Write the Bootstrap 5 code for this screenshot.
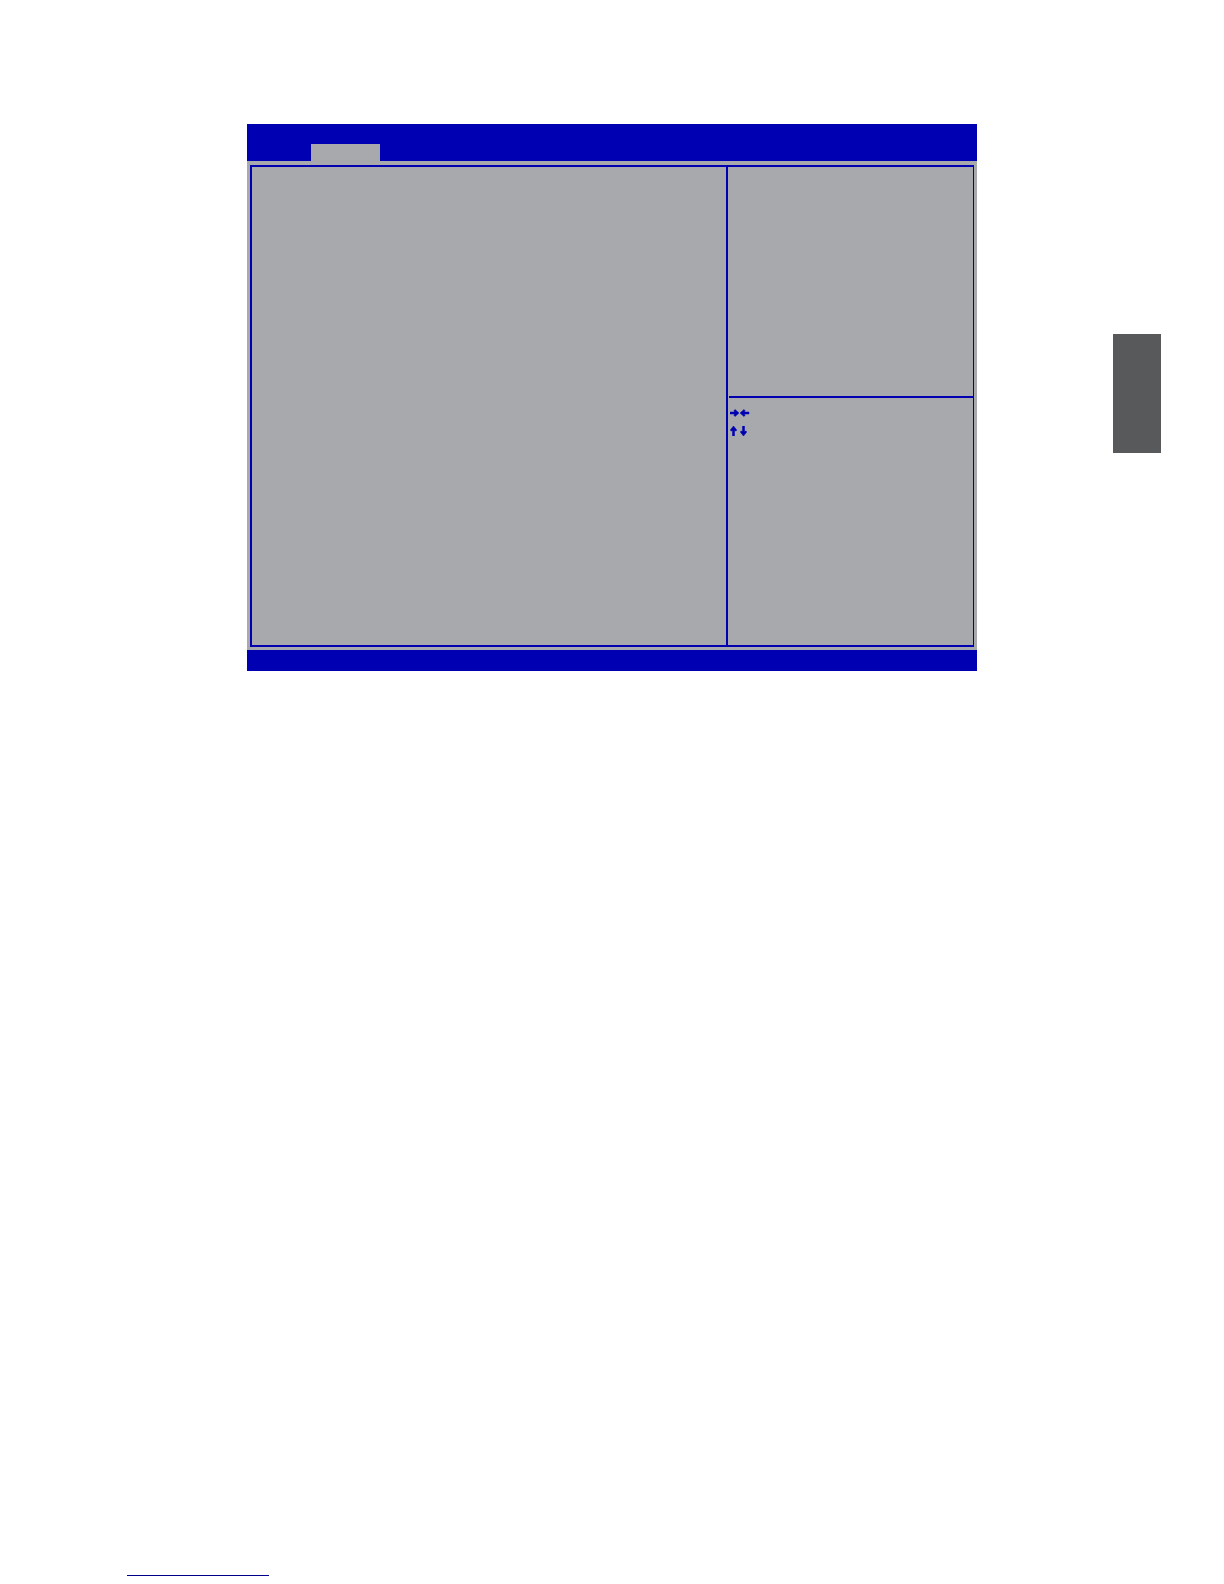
<!DOCTYPE html>
<html lang="en">
<head>
<meta charset="utf-8">
<meta name="viewport" content="width=device-width, initial-scale=1">
<title>Setup Utility</title>
<link href="https://cdn.jsdelivr.net/npm/bootstrap@5.3.0/dist/css/bootstrap.min.css" rel="stylesheet">
<style>
:root { --bios-blue: #0000b3; --bios-line: #0000b0; --bios-gray: #a7a9ac; }
body { background: #fff; font-family: "Liberation Sans", sans-serif; }
.sheet { padding: 124px 63px 0 247px; gap: 136px; }
.bios { background: var(--bios-gray); }
.bios-head { background: var(--bios-blue); height: 37px; padding-left: 64px; }
.bios-tab { width: 69px; height: 17px; background: var(--bios-gray); }
.bios-body { padding: 4px 3px 3px; }
.bios-frame { border: 2px solid var(--bios-line); border-right-width: 1px; min-height: 482px; }
.bios-side { width: 247px; flex: none; border-left: 2px solid var(--bios-line); }
.bios-help { height: 231px; margin-left: 1px; border-bottom: 2px solid var(--bios-line); }
.bios-keys { padding: 10px 2px; gap: 8px; }
.bios-keys svg { display: block; fill: var(--bios-blue); stroke: var(--bios-blue); stroke-width: .5; }
.bios-foot { background: var(--bios-blue); height: 21px; }
.thumb-tab { flex: none; width: 48px; height: 119px; margin-top: 210px; background: #58595b; }
.page-foot { padding: 0 0 8px 127px; }
.foot-link { width: 142px; height: 1px; background: #00008b; }
</style>
<script src="https://cdn.jsdelivr.net/npm/bootstrap@5.3.0/dist/js/bootstrap.bundle.min.js"></script>
</head>
<body>
<div class="d-flex flex-column min-vh-100">
  <main class="sheet d-flex align-items-start">
    <section class="bios flex-grow-1" aria-label="Setup screen">
      <nav class="bios-head d-flex align-items-end" aria-label="Setup menu">
        <button type="button" class="bios-tab border-0 rounded-0 p-0" aria-label="Current menu"></button>
      </nav>
      <div class="bios-body">
        <div class="bios-frame d-flex">
          <div class="flex-grow-1"></div>
          <aside class="bios-side">
            <div class="bios-help"></div>
            <div class="bios-keys d-flex flex-column">
              <svg width="20" height="10" viewBox="0 0 20 10" aria-hidden="true">
                <path d="M0 4h4.500L4 2.500 5 1.500 9 5 5 8.500 4 7.500 4.500 6H0z"/>
                <path d="M19 4h-4.500l.5-1.500-1-1L10 5l4 3.500 1-1-.5-1.500H19z"/>
              </svg>
              <svg width="20" height="10" viewBox="0 0 20 10" aria-hidden="true">
                <path d="M2.500 10V4.500L1 5 .3 4l3.200-4 3.200 4L6 5l-1.500-.5V10z"/>
                <path d="M12.500 0v5.500L11 5l-.7 1 3.200 4 3.200-4-.7-1-1.500.5V0z"/>
              </svg>
            </div>
          </aside>
        </div>
      </div>
      <div class="bios-foot"></div>
    </section>
    <div class="thumb-tab"></div>
  </main>
  <footer class="page-foot mt-auto">
    <a href="#" class="foot-link d-block" aria-label="Website"></a>
  </footer>
</div>
</body>
</html>
